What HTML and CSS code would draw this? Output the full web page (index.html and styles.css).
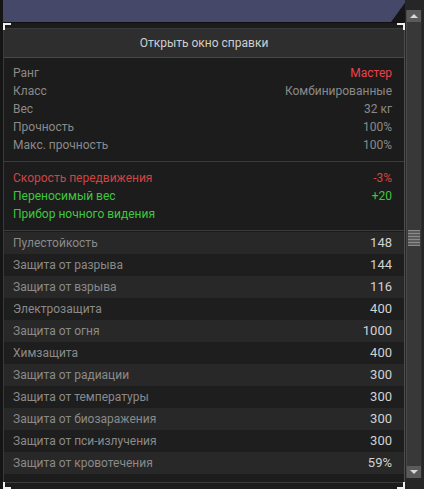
FILE: index.html
```html
<!DOCTYPE HTML><html>
<head>
  <title>Item info</title>
  <meta name="viewport" content="width=device-width, initial-scale=1">
  <link rel="stylesheet" href="styles.css">
</head>
<body>
  <div class="edge-left"></div>
  <div class="main">
    <div class="sky"></div>
    <div class="panel">
      <span class="corner tl"></span>
      <span class="corner tr"></span>
      <span class="corner bl"></span>
      <span class="corner br"></span>
      <div class="header">Открыть окно справки</div>
      <div class="section info">
        <div class="row"><span>Ранг</span><span class="red">Мастер</span></div>
        <div class="row"><span>Класс</span><span>Комбинированные</span></div>
        <div class="row"><span>Вес</span><span>32 кг</span></div>
        <div class="row"><span>Прочность</span><span>100%</span></div>
        <div class="row"><span>Макс. прочность</span><span>100%</span></div>
      </div>
      <div class="section effects">
        <div class="row"><span class="bad">Скорость передвижения</span><span class="bad">-3%</span></div>
        <div class="row"><span class="good">Переносимый вес</span><span class="good">+20</span></div>
        <div class="row"><span class="good">Прибор ночного видения</span></div>
      </div>
      <div class="stats">
        <div class="stat"><span>Пулестойкость</span><span class="num">148</span></div>
        <div class="stat"><span>Защита от разрыва</span><span class="num">144</span></div>
        <div class="stat"><span>Защита от взрыва</span><span class="num">116</span></div>
        <div class="stat"><span>Электрозащита</span><span class="num">400</span></div>
        <div class="stat"><span>Защита от огня</span><span class="num">1000</span></div>
        <div class="stat"><span>Химзащита</span><span class="num">400</span></div>
        <div class="stat"><span>Защита от радиации</span><span class="num">300</span></div>
        <div class="stat"><span>Защита от температуры</span><span class="num">300</span></div>
        <div class="stat"><span>Защита от биозаражения</span><span class="num">300</span></div>
        <div class="stat"><span>Защита от пси-излучения</span><span class="num">300</span></div>
        <div class="stat"><span>Защита от кровотечения</span><span class="num">59%</span></div>
      </div>
    </div>
  </div>
  <div class="side">
    <div class="scrollbar">
      <div class="sb-btn"><span class="arrow up"></span></div>
      <div class="track">
        <div class="thumb"></div>
      </div>
      <div class="sb-btn"><span class="arrow down"></span></div>
    </div>
  </div>
</body>
</html>
```

FILE: styles.css
```css
html, body {
  margin: 0;
  padding: 0;
}
body {
  width: 424px;
  height: 489px;
  overflow: hidden;
  background-color: #161616;
  display: flex;
  font-family: "Roboto", "Liberation Sans", sans-serif;
  font-size: 12px;
}
.edge-left {
  width: 3px;
  background-color: #151515;
}
.main {
  width: 402px;
  display: flex;
  flex-direction: column;
}
.sky {
  height: 22px;
  background-color: #46486a;
  clip-path: polygon(0 0, 404px 0, 388px 22px, 0 22px);
}
.panel {
  position: relative;
  flex: 1;
  background-color: #1c1c1c;
  border-top: 1px solid #101010;
  border-left: 1px solid #3a3a3a;
  border-right: 1px solid #4e4e4e;
  padding-top: 5px;
  display: flex;
  flex-direction: column;
}
.corner {
  position: absolute;
  width: 6px;
  height: 5px;
  border-color: #f0f0f0;
  border-style: solid;
  border-width: 0;
}
.corner.tl { top: 0; left: -1px; border-top-width: 2px; border-left-width: 2px; }
.corner.tr { top: 0; right: -1px; border-top-width: 2px; border-right-width: 2px; }
.corner.bl { bottom: 0; left: -1px; border-bottom-width: 2px; border-left-width: 2px; }
.corner.br { bottom: 0; right: -1px; border-bottom-width: 2px; border-right-width: 2px; }
.header {
  height: 28px;
  line-height: 28px;
  background-color: #2e2e2e;
  border-top: 1px solid #3a3a3a;
  border-bottom: 1px solid #474747;
  color: #cecece;
  text-align: center;
  font-size: 12px;
}
.section {
  padding: 6px 12px 7px 9px;
  border-bottom: 1px solid #3c3c3c;
}
.effects {
  padding-top: 7px;
}
.row {
  height: 18px;
  line-height: 18px;
  display: flex;
  justify-content: space-between;
  color: #8a8a8a;
}
.red { color: #e8424c; }
.bad { color: #d04444; }
.good { color: #3cc83c; }
.stats {
  flex: 1;
  padding-top: 1px;
  border-bottom: 1px solid #3c3c3c;
  margin-bottom: 6px;
}
.stat {
  height: 22px;
  line-height: 22px;
  display: flex;
  justify-content: space-between;
  padding: 0 12px 0 9px;
  color: #8a8a8a;
  background-color: #1e1e1e;
}
.stat:nth-child(odd) {
  background-color: #282828;
}
.num {
  color: #d2d2d2;
  font-size: 13px;
}
.side {
  width: 19px;
  background-color: #262626;
  padding-top: 10px;
  display: flex;
  flex-direction: column;
}
.scrollbar {
  width: 14px;
  height: 468px;
  margin-left: 1px;
  background-color: #383838;
  border-left: 1px solid #4a4a4a;
  border-right: 1px solid #2c2c2c;
  display: flex;
  flex-direction: column;
}
.sb-btn {
  height: 12px;
  background-color: #5a5a5a;
  display: flex;
  align-items: center;
  justify-content: center;
}
.arrow {
  width: 0;
  height: 0;
  border-left: 4px solid transparent;
  border-right: 4px solid transparent;
}
.arrow.up { border-bottom: 4px solid #d8d8d8; }
.arrow.down { border-top: 4px solid #d8d8d8; }
.track {
  flex: 1;
  padding-top: 208px;
}
.thumb {
  height: 16px;
  margin: 0 1px;
  background: repeating-linear-gradient(#8a8a8a 0 1px, #5c5c5c 1px 3px);
}
```
